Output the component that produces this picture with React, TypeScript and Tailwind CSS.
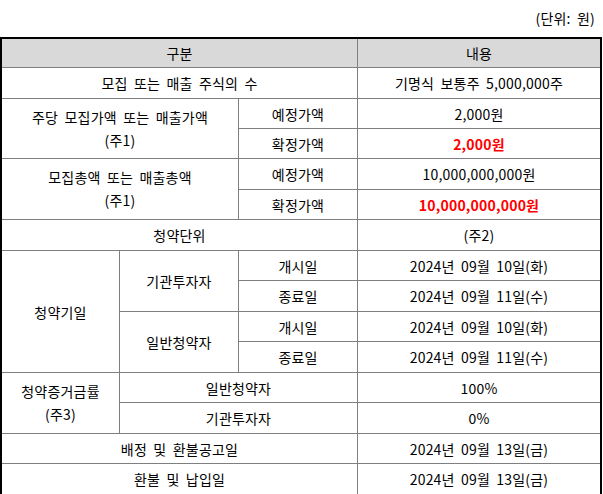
import React from "react";

const C = ({ className = "", children }: { className?: string; children?: React.ReactNode }) => (
  <div className={`bg-white flex items-center justify-center text-center ${className}`}>{children}</div>
);

const red = "text-[#ff0000] font-bold";

export default function App() {
  return (
    <div className="w-[603px] h-[494px] overflow-hidden bg-white text-black text-[14px] font-['Noto_Sans_CJK_KR','Noto_Sans',sans-serif] leading-none [word-spacing:3px] tracking-[0.2px]">
      <div className="h-[37px] flex items-center justify-end pr-[8px] pb-[1px]">(단위: 원)</div>
      <div className="w-[602px] grid grid-cols-[117px_118px_118px_242px] grid-rows-[28px_30px_29px_29px_30px_29px_30px_29px_30px_29px_30px_29px_30px_29px_30px] gap-px bg-[#7f7f7f] border-t-2 border-l-2 border-r-2 border-black">
        <C className="col-span-3 bg-[#d9d9d9]!">구분</C>
        <C className="bg-[#d9d9d9]!">내용</C>

        <C className="col-span-3">모집 또는 매출 주식의 수</C>
        <C>기명식 보통주 5,000,000주</C>

        <C className="col-span-2 row-span-2 flex-col leading-[23px]">
          <span>주당 모집가액 또는 매출가액</span>
          <span>(주1)</span>
        </C>
        <C>예정가액</C>
        <C>2,000원</C>
        <C>확정가액</C>
        <C className={red}>2,000원</C>

        <C className="col-span-2 row-span-2 flex-col leading-[23px]">
          <span>모집총액 또는 매출총액</span>
          <span>(주1)</span>
        </C>
        <C>예정가액</C>
        <C>10,000,000,000원</C>
        <C>확정가액</C>
        <C className={red}>10,000,000,000원</C>

        <C className="col-span-3">청약단위</C>
        <C>(주2)</C>

        <C className="row-span-4">청약기일</C>
        <C className="row-span-2">기관투자자</C>
        <C>개시일</C>
        <C>2024년 09월 10일(화)</C>
        <C>종료일</C>
        <C>2024년 09월 11일(수)</C>
        <C className="row-span-2">일반청약자</C>
        <C>개시일</C>
        <C>2024년 09월 10일(화)</C>
        <C>종료일</C>
        <C>2024년 09월 11일(수)</C>

        <C className="row-span-2 flex-col leading-[23px]">
          <span>청약증거금률</span>
          <span>(주3)</span>
        </C>
        <C className="col-span-2">일반청약자</C>
        <C>100%</C>
        <C className="col-span-2">기관투자자</C>
        <C>0%</C>

        <C className="col-span-3">배정 및 환불공고일</C>
        <C>2024년 09월 13일(금)</C>

        <C className="col-span-3">환불 및 납입일</C>
        <C>2024년 09월 13일(금)</C>
      </div>
    </div>
  );
}
